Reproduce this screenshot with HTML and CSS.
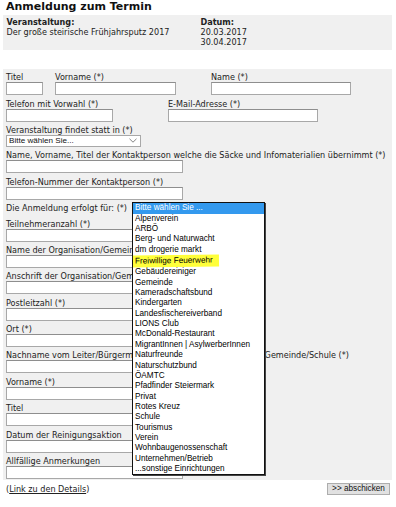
FILE: index.html
```html
<!DOCTYPE html>
<html lang="de">
<head>
    <meta charset="UTF-8">
    <title>Anmeldung zum Termin</title>
    <link rel="stylesheet" href="styles.css">
</head>
<body>

<div class="page">
    <h1 class="title">Anmeldung zum Termin</h1>

    <div class="event-box">
        <div class="event-col">
            <div class="event-label">Veranstaltung:</div>
            <div>Der große steirische Frühjahrsputz 2017</div>
        </div>
        <div class="event-col">
            <div class="event-label">Datum:</div>
            <div>20.03.2017</div>
            <div>30.04.2017</div>
        </div>
    </div>

    <form class="form-box">
        <div class="row">
            <div class="field field-titel">
                <label>Titel</label>
                <input class="input input-titel" type="text">
            </div>
            <div class="field field-vorname">
                <label>Vorname (*)</label>
                <input class="input input-vorname" type="text">
            </div>
            <div class="field">
                <label>Name (*)</label>
                <input class="input input-name" type="text">
            </div>
        </div>

        <div class="row">
            <div class="field field-phone">
                <label>Telefon mit Vorwahl (*)</label>
                <input class="input input-phone" type="text">
            </div>
            <div class="field">
                <label>E-Mail-Adresse (*)</label>
                <input class="input input-mail" type="text">
            </div>
        </div>

        <div class="field">
            <label>Veranstaltung findet statt in (*)</label>
            <div class="select">
                <span>Bitte wählen Sie...</span>
                <svg class="chevron" width="8" height="5" viewBox="0 0 8 5">
                    <polyline points="0.5,0.8 4,4.2 7.5,0.8" fill="none" stroke="#777" stroke-width="0.9"/>
                </svg>
            </div>
        </div>

        <div class="field">
            <label>Name, Vorname, Titel der Kontaktperson welche die Säcke und Infomaterialien übernimmt (*)</label>
            <input class="input" type="text">
        </div>

        <div class="field">
            <label>Telefon-Nummer der Kontaktperson (*)</label>
            <input class="input" type="text">
        </div>

        <div class="field field-inline">
            <label>Die Anmeldung erfolgt für: (*)</label>
            <ul class="dropdown">
                <li class="selected">Bitte wählen Sie ...</li>
                <li>Alpenverein</li>
                <li>ARBÖ</li>
                <li>Berg- und Naturwacht</li>
                <li>dm drogerie markt</li>
                <li><span class="marker">Freiwillige Feuerwehr</span></li>
                <li>Gebäudereiniger</li>
                <li>Gemeinde</li>
                <li>Kameradschaftsbund</li>
                <li>Kindergarten</li>
                <li>Landesfischereiverband</li>
                <li>LIONS Club</li>
                <li>McDonald-Restaurant</li>
                <li>MigrantInnen | AsylwerberInnen</li>
                <li>Naturfreunde</li>
                <li>Naturschutzbund</li>
                <li>ÖAMTC</li>
                <li>Pfadfinder Steiermark</li>
                <li>Privat</li>
                <li>Rotes Kreuz</li>
                <li>Schule</li>
                <li>Tourismus</li>
                <li>Verein</li>
                <li>Wohnbaugenossenschaft</li>
                <li>Unternehmen/Betrieb</li>
                <li>...sonstige Einrichtungen</li>
            </ul>
        </div>

        <div class="field">
            <label>Teilnehmeranzahl (*)</label>
            <input class="input" type="text">
        </div>

        <div class="field">
            <label>Name der Organisation/Gemeinde/Schule (*)</label>
            <input class="input" type="text">
        </div>

        <div class="field">
            <label>Anschrift der Organisation/Gemeinde/Schule (*)</label>
            <input class="input" type="text">
        </div>

        <div class="field">
            <label>Postleitzahl (*)</label>
            <input class="input" type="text">
        </div>

        <div class="field">
            <label>Ort (*)</label>
            <input class="input" type="text">
        </div>

        <div class="field">
            <label>Nachname vom Leiter/Bürgermeister/Direktor der Organisation/Gemeinde/Schule (*)</label>
            <input class="input" type="text">
        </div>

        <div class="field">
            <label>Vorname (*)</label>
            <input class="input" type="text">
        </div>

        <div class="field">
            <label>Titel</label>
            <input class="input" type="text">
        </div>

        <div class="field">
            <label>Datum der Reinigungsaktion</label>
            <input class="input" type="text">
        </div>

        <div class="field field-last">
            <label>Allfällige Anmerkungen</label>
            <input class="input" type="text">
        </div>
    </form>

    <div class="footer">
        <span class="details">(<a href="#">Link zu den Details</a>)</span>
        <button class="submit" type="button">&gt;&gt; abschicken</button>
    </div>
</div>

</body>
</html>
```

FILE: styles.css
```css
body {
    margin: 0;
    background: #fff;
    color: #222;
    font-family: "DejaVu Sans", Verdana, sans-serif;
    font-size: 8.1px;
}

.page {
    margin: 0 4px 0 3px;
}

.title {
    margin: 0 0 1px;
    padding-left: 3px;
    font-size: 11px;
    line-height: 14px;
    font-weight: bold;
    color: #111;
}

.event-box {
    display: grid;
    grid-template-columns: 194px auto;
    padding: 2px 3px 3px 3.5px;
    background: #f0f0f0;
    line-height: 10px;
}

.event-label {
    font-weight: bold;
}

.form-box {
    margin: 19px 0 0;
    padding: 3.2px 3px 1.4px;
    background: #f0f0f0;
}

.row {
    display: flex;
}

.field {
    margin-bottom: 3.4px;
}

.field label {
    display: block;
    line-height: 10px;
    white-space: nowrap;
}

.field-titel {
    width: 49px;
}

.field-vorname {
    width: 156px;
}

.field-phone {
    width: 162px;
}

.field-last {
    margin-bottom: 0;
}

.input {
    display: block;
    box-sizing: border-box;
    width: 177px;
    height: 13px;
    margin: 0;
    padding: 0;
    border: 1px solid #a8a8a8;
    border-top-color: #8e8e8e;
    background: #fff;
}

.input-titel {
    width: 37px;
}

.input-vorname {
    width: 121px;
}

.input-name {
    width: 140px;
}

.input-phone {
    width: 107px;
}

.input-mail {
    width: 150px;
}

.select {
    display: flex;
    align-items: center;
    justify-content: space-between;
    box-sizing: border-box;
    width: 135px;
    height: 12px;
    padding: 0 3px 0 2px;
    border: 1px solid #a8a8a8;
    background: #fff;
    font-family: "Liberation Sans", Arial, sans-serif;
    color: #111;
}

.field-inline {
    position: relative;
    height: 12px;
}

.dropdown {
    position: absolute;
    top: -1px;
    left: 126px;
    z-index: 2;
    width: 131px;
    margin: 0;
    padding: 0;
    list-style: none;
    border: 1px solid #111;
    box-shadow: 1px 1px 0 #444;
    background: #fff;
    font-family: "Liberation Sans", Arial, sans-serif;
    font-size: 8.2px;
    line-height: 10.36px;
    color: #000;
}

.dropdown li {
    padding-left: 2px;
    white-space: nowrap;
}

.dropdown li.selected {
    background: #3399ee;
    color: #fff;
}

.marker {
    display: inline-block;
    margin-left: -2px;
    padding: 1px 6px 1px 2px;
    background: #ffff3a;
    transform: rotate(-0.8deg);
}

.footer {
    display: flex;
    align-items: center;
    justify-content: space-between;
    padding: 3px 2px 0 3px;
}

.details a {
    color: #222;
}

.submit {
    width: 63px;
    height: 12px;
    padding: 0;
    border: 1px solid #adadad;
    background: #e1e1e1;
    font-family: "Liberation Sans", Arial, sans-serif;
    font-size: 8.2px;
    line-height: 10px;
    color: #111;
}
```
